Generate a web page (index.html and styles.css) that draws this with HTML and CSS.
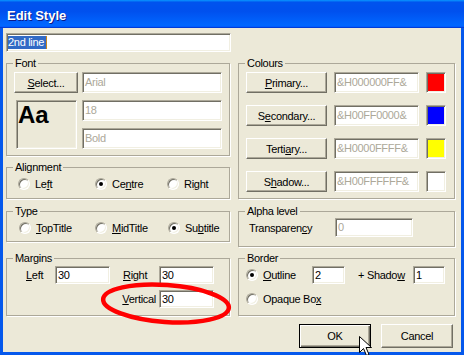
FILE: index.html
```html
<!DOCTYPE html>
<html lang="en">

<head>
    <meta charset="UTF-8">
    <meta name="viewport" content="width=device-width, initial-scale=1.0">
    <title>Edit Style</title>
    <link rel="stylesheet" href="styles.css">
</head>

<body>
    <div class="window">
        <div class="titlebar">Edit Style</div>
        <div class="client">
            <div class="field name-field"><span class="selected">2nd line</span><span class="caret"></span></div>

            <div class="layout">
                <div class="stack">
                    <fieldset class="group">
                        <legend>Font</legend>
                        <div class="group-body font-body">
                            <button class="btn"><u>S</u>elect...</button>
                            <div class="field disabled">Arial</div>
                            <div class="preview">Aa</div>
                            <div class="font-fields">
                                <div class="field disabled">18</div>
                                <div class="field disabled">Bold</div>
                            </div>
                        </div>
                    </fieldset>

                    <fieldset class="group align-group">
                        <legend>Alignment</legend>
                        <div class="group-body radio-row align-row">
                            <label class="option"><span class="radio"></span><span>Le<u>f</u>t</span></label>
                            <label class="option"><span class="radio checked"></span><span>Ce<u>n</u>tre</span></label>
                            <label class="option"><span class="radio"></span><span>Ri<u>g</u>ht</span></label>
                        </div>
                    </fieldset>
                </div>

                <fieldset class="group">
                    <legend>Colours</legend>
                    <div class="group-body colour-body">
                        <button class="btn"><u>P</u>rimary...</button>
                        <div class="field disabled">&amp;H000000FF&amp;</div>
                        <div class="swatch swatch-red"></div>

                        <button class="btn">S<u>e</u>condary...</button>
                        <div class="field disabled">&amp;H00FF0000&amp;</div>
                        <div class="swatch swatch-blue"></div>

                        <button class="btn">Terti<u>a</u>ry...</button>
                        <div class="field disabled">&amp;H0000FFFF&amp;</div>
                        <div class="swatch swatch-yellow"></div>

                        <button class="btn">S<u>h</u>adow...</button>
                        <div class="field disabled">&amp;H00FFFFFF&amp;</div>
                        <div class="swatch swatch-white"></div>
                    </div>
                </fieldset>

                <fieldset class="group row-b">
                    <legend>Type</legend>
                    <div class="group-body radio-row type-row">
                        <label class="option"><span class="radio"></span><span><u>T</u>opTitle</span></label>
                        <label class="option"><span class="radio"></span><span><u>M</u>idTitle</span></label>
                        <label class="option"><span class="radio checked"></span><span>Su<u>b</u>title</span></label>
                    </div>
                </fieldset>

                <fieldset class="group row-b">
                    <legend>Alpha level</legend>
                    <div class="group-body alpha-body">
                        <span class="label">Transparen<u>c</u>y</span>
                        <div class="field small disabled">0</div>
                    </div>
                </fieldset>

                <fieldset class="group row-c">
                    <legend>Margins</legend>
                    <div class="group-body margins-body">
                        <span class="label"><u>L</u>eft</span>
                        <div class="field short">30</div>
                        <span></span>
                        <span class="label"><u>R</u>ight</span>
                        <div class="field short">30</div>
                        <span class="label vertical-label"><u>V</u>ertical</span>
                        <div class="field short vertical-field">30</div>
                    </div>
                </fieldset>

                <fieldset class="group row-c">
                    <legend>Border</legend>
                    <div class="group-body border-body">
                        <div class="border-line">
                            <label class="option outline-option"><span class="radio checked"></span><span><u>O</u>utline</span></label>
                            <div class="field short outline-field">2</div>
                            <span class="label shadow-label">+ Shado<u>w</u></span>
                            <div class="field short shadow-field">1</div>
                        </div>
                        <label class="option"><span class="radio"></span><span>Opaque Bo<u>x</u></span></label>
                    </div>
                </fieldset>

                <div class="actions">
                    <button class="btn btn-action btn-default">OK</button>
                    <button class="btn btn-action">Cancel</button>
                </div>
            </div>
        </div>

        <!-- red marker drawn over the screenshot -->
        <svg class="marker" width="140" height="50" viewBox="0 0 140 50">
            <ellipse cx="68" cy="23.5" rx="63" ry="18.5" transform="rotate(4 68 23.5)" fill="none" stroke="#ff0000" stroke-width="4.5" />
        </svg>

        <svg class="cursor" width="14" height="21" viewBox="0 0 14 21">
            <path d="M0.5 0.5 V16.5 L4.5 12.5 L7.5 19.5 L10 18.5 L7 11.5 H12.5 Z" fill="#fff" stroke="#000" stroke-width="1" stroke-linejoin="miter" />
        </svg>
    </div>
</body>

</html>
```

FILE: styles.css
```css
* {
    box-sizing: border-box;
}

body {
    margin: 0;
    background-color: #000;
    font-family: "Liberation Sans", Arial, sans-serif;
    font-size: 11px;
    letter-spacing: -0.3px;
    color: #000;
}

.window {
    position: relative;
    width: 464px;
    height: 355px;
    overflow: hidden;
}

.titlebar {
    height: 28px;
    padding: 4px 0 0 7px;
    line-height: 24px;
    font-size: 13px;
    font-weight: bold;
    letter-spacing: 0;
    color: #fff;
    text-shadow: 1px 1px 0 #0a1b8a;
    background: linear-gradient(180deg, #0997ff, #0053ee 8%, #0050ee 40%, #06f 88%, #06f 93%, #005bff 95%, #003dd7 96%, #003dd7);
}

.client {
    height: 327px;
    background-color: #ece9d8;
    border: 3px solid #0558ec;
    border-top: 0;
    padding: 5px 6px 0 3px;
}

/* sunken text boxes */
.field {
    height: 21px;
    background-color: #fff;
    border: 1px solid;
    border-color: #aca899 #fff #fff #aca899;
    box-shadow: inset 1px 1px 0 #716f64, inset -1px -1px 0 #f1efe2;
    padding: 0 2px;
    line-height: 18px;
    white-space: nowrap;
    overflow: hidden;
}

.field.disabled {
    color: #aca899;
}

.field.small {
    height: 19px;
    line-height: 17px;
}

.field.short {
    height: 18px;
    line-height: 16px;
}

.name-field {
    width: 225px;
    height: 19px;
    padding: 2px 0 0 1px;
    margin-bottom: 5px;
    line-height: 13px;
}

.selected {
    display: inline-block;
    height: 13px;
    padding-right: 2px;
    background-color: #316ac5;
    color: #fff;
    vertical-align: top;
}

.caret {
    display: inline-block;
    width: 1px;
    height: 13px;
    background-color: #c8841e;
    vertical-align: top;
}

/* raised push buttons */
.btn {
    height: 21px;
    margin: 0;
    padding: 0;
    font: inherit;
    letter-spacing: inherit;
    color: #000;
    background-color: #ece9d8;
    border: 1px solid;
    border-color: #fff #716f64 #716f64 #fff;
    box-shadow: inset -1px -1px 0 #aca899;
}

.btn-action {
    width: 72px;
    height: 24px;
}

.btn-default {
    border: 1px solid #000;
    box-shadow: inset 1px 1px 0 #fff, inset -1px -1px 0 #716f64, inset -2px -2px 0 #aca899;
}

/* two column dialog body */
.layout {
    display: grid;
    grid-template-columns: 224px 217px;
    column-gap: 8px;
    align-items: start;
}

.stack {
    display: flex;
    flex-direction: column;
}

.group {
    margin: 0;
    padding: 0;
    min-width: 0;
    border: 1px solid #aca899;
    box-shadow: 1px 1px 0 #fff;
}

.group legend {
    margin-left: 6px;
    padding: 0 2px;
    line-height: 13px;
}

.align-group {
    margin-top: 5px;
}

.row-b {
    margin-top: 6px;
}

.row-c {
    margin-top: 5px;
}

.font-body {
    display: grid;
    grid-template-columns: 64px 140px;
    grid-template-rows: 21px 49px;
    gap: 7px 4px;
    padding: 2px 6px 6px 7px;
}

.preview {
    width: 61px;
    margin-left: 2px;
    border: 1px solid;
    border-color: #aca899 #fff #fff #aca899;
    box-shadow: inset 1px 1px 0 #716f64, inset -1px -1px 0 #f1efe2;
    padding: 2px 0 0 1px;
    font-size: 24px;
    font-weight: bold;
    line-height: 24px;
    letter-spacing: 0;
}

.font-fields {
    display: flex;
    flex-direction: column;
    gap: 7px;
}

.colour-body {
    display: grid;
    grid-template-columns: 81px 85px 20px;
    grid-auto-rows: 21px;
    gap: 12px 7px;
    padding: 2px 0 6px 7px;
}

.swatch {
    border: 1px solid;
    border-color: #aca899 #fff #fff #aca899;
    box-shadow: inset 1px 1px 0 #716f64, inset -1px -1px 0 #f1efe2;
}

.swatch-red {
    background-color: #ff0000;
}

.swatch-blue {
    background-color: #0000ff;
}

.swatch-yellow {
    background-color: #ffff00;
}

.swatch-white {
    background-color: #fff;
}

/* radio buttons */
.radio-row {
    display: grid;
    height: 16px;
    box-sizing: content-box;
}

.align-row {
    grid-template-columns: 77px 72px auto;
    padding: 2px 0 6px 11px;
}

.type-row {
    grid-template-columns: 76px 73px auto;
    padding: 2px 0 5px 12px;
}

.option {
    display: flex;
    align-items: center;
    gap: 5px;
    height: 16px;
    line-height: 16px;
    white-space: nowrap;
}

.radio {
    position: relative;
    flex: none;
    width: 12px;
    height: 12px;
    border-radius: 50%;
    background-color: #fff;
    border: 1px solid;
    border-color: #aca899 #fff #fff #aca899;
    box-shadow: inset 1px 1px 0 #716f64, inset -1px -1px 0 #f1efe2;
}

.radio.checked::after {
    content: "";
    position: absolute;
    left: 3px;
    top: 3px;
    width: 4px;
    height: 4px;
    border-radius: 50%;
    background-color: #000;
}

.label {
    white-space: nowrap;
}

.alpha-body {
    display: grid;
    grid-template-columns: 86px 78px;
    align-items: center;
    padding: 0 0 9px 10px;
}

.margins-body {
    display: grid;
    grid-template-columns: 29px 55px 13px 36px 55px;
    grid-auto-rows: 18px;
    row-gap: 6px;
    align-items: center;
    padding: 1px 0 7px 19px;
}

.vertical-label {
    grid-column: 3 / 5;
    justify-self: end;
    padding-right: 3px;
}

.vertical-field {
    grid-column: 5;
}

.border-body {
    display: flex;
    flex-direction: column;
    gap: 7px;
    padding: 1px 0 8px 7px;
}

.border-line {
    display: flex;
    align-items: center;
    height: 18px;
}

.outline-option {
    width: 66px;
}

.outline-field {
    width: 33px;
}

.shadow-label {
    width: 55px;
    margin-left: 13px;
}

.shadow-field {
    width: 32px;
}

.actions {
    grid-column: 2;
    display: flex;
    justify-content: flex-end;
    gap: 10px;
    margin-top: 8px;
    padding-right: 2px;
}

/* overlays */
.marker {
    position: absolute;
    left: 98px;
    top: 280px;
}

.cursor {
    position: absolute;
    left: 359px;
    top: 336px;
}
```
